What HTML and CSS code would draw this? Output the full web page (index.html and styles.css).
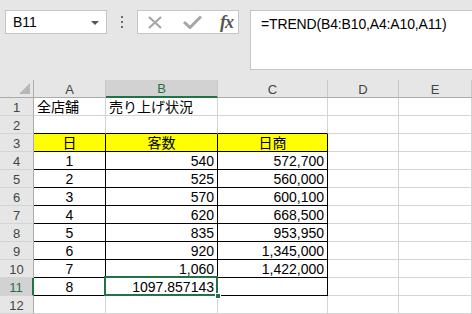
FILE: index.html
```html
<!DOCTYPE html>
<html lang="ja">
<head>
<meta charset="utf-8">
<link rel="stylesheet" href="styles.css">
</head>
<body>
<div class="top">
  <div class="namebox"><span>B11</span><span class="tri"></span></div>
  <div class="dots"><i></i><i></i><i></i></div>
  <div class="fxbox">
    <svg class="ico-x" width="14" height="13" viewBox="0 0 14 13"><path d="M1 1 L13 12 M13 1 L1 12" stroke="#a6a6a6" stroke-width="2.2" fill="none"/></svg>
    <svg class="ico-check" width="19" height="14" viewBox="0 0 19 14"><path d="M1 7 L7 12.5 L18 1.5" stroke="#a6a6a6" stroke-width="3" fill="none"/></svg>
    <span class="fx">fx</span>
  </div>
  <div class="formula">=TREND(B4:B10,A4:A10,A11)</div>
</div>
<div class="sheet">
  <div class="ch corner"><span class="corner-tri"></span></div>
  <div class="ch">A</div>
  <div class="ch sel">B</div>
  <div class="ch">C</div>
  <div class="ch">D</div>
  <div class="ch">E</div>

  <div class="rh">1</div>
  <div class="c">全店舗</div>
  <div class="c">売り上げ状況</div>
  <div class="c"></div><div class="c"></div><div class="c"></div>

  <div class="rh">2</div>
  <div class="c tb"></div><div class="c tb"></div><div class="c tb"></div>
  <div class="c"></div><div class="c"></div>

  <div class="rh">3</div>
  <div class="c b y ctr">日</div>
  <div class="c b y ctr">客数</div>
  <div class="c b y ctr">日商</div>
  <div class="c"></div><div class="c"></div>

  <div class="rh">4</div>
  <div class="c b ctr">1</div><div class="c b r">540</div><div class="c b r">572,700</div>
  <div class="c"></div><div class="c"></div>

  <div class="rh">5</div>
  <div class="c b ctr">2</div><div class="c b r">525</div><div class="c b r">560,000</div>
  <div class="c"></div><div class="c"></div>

  <div class="rh">6</div>
  <div class="c b ctr">3</div><div class="c b r">570</div><div class="c b r">600,100</div>
  <div class="c"></div><div class="c"></div>

  <div class="rh">7</div>
  <div class="c b ctr">4</div><div class="c b r">620</div><div class="c b r">668,500</div>
  <div class="c"></div><div class="c"></div>

  <div class="rh">8</div>
  <div class="c b ctr">5</div><div class="c b r">835</div><div class="c b r">953,950</div>
  <div class="c"></div><div class="c"></div>

  <div class="rh">9</div>
  <div class="c b ctr">6</div><div class="c b r">920</div><div class="c b r">1,345,000</div>
  <div class="c"></div><div class="c"></div>

  <div class="rh">10</div>
  <div class="c b ctr">7</div><div class="c b r">1,060</div><div class="c b r">1,422,000</div>
  <div class="c"></div><div class="c"></div>

  <div class="rh sel">11</div>
  <div class="c b ctr">8</div><div class="c b r active">1097.857143<span class="handle"></span></div><div class="c b r"></div>
  <div class="c"></div><div class="c"></div>

  <div class="rh">12</div>
  <div class="c"></div><div class="c"></div><div class="c"></div>
  <div class="c"></div><div class="c"></div>
</div>
</body>
</html>
```
FILE: styles.css
```css
* { box-sizing: border-box; }
html, body { margin: 0; padding: 0; }
body {
  width: 472px;
  height: 314px;
  overflow: hidden;
  background: #e6e6e6;
  font-family: "Liberation Sans", "Noto Sans CJK JP", sans-serif;
  font-size: 14px;
  color: #000;
}
.top {
  height: 80px;
  display: flex;
  align-items: flex-start;
  padding: 10px 0 0 5px;
}
.namebox {
  width: 102px;
  height: 24px;
  background: #fff;
  border: 1px solid #c6c6c6;
  display: flex;
  align-items: center;
  justify-content: space-between;
  padding: 0 7px 0 7px;
  font-size: 14px;
}
.tri {
  width: 0; height: 0;
  border-left: 4px solid transparent;
  border-right: 4px solid transparent;
  border-top: 4px solid #555;
  margin-top: 1px;
}
.dots {
  width: 30px;
  height: 24px;
  display: flex;
  flex-direction: column;
  align-items: center;
  justify-content: center;
  gap: 3px;
}
.dots i {
  display: block;
  width: 2px; height: 2px;
  background: #6a6a6a;
}
.fxbox {
  width: 102px;
  height: 24px;
  background: #fff;
  border: 1px solid #c6c6c6;
  display: flex;
  align-items: center;
  padding: 0 0 0 10px;
}
.ico-x { margin-right: 21px; }
.ico-check { margin-right: 18px; }
.fx {
  font-family: "Liberation Serif", serif;
  font-style: italic;
  font-weight: bold;
  font-size: 18px;
  color: #555;
  letter-spacing: -1px;
}
.formula {
  margin-left: 11px;
  flex: 1;
  height: 60px;
  background: #fff;
  border: 1px solid #c6c6c6;
  border-right: none;
  padding: 5px 0 0 10px;
  font-size: 14px;
  letter-spacing: -0.15px;
}
.sheet {
  display: grid;
  grid-template-columns: 34px 72px 112px 110px 71px 73px;
  grid-auto-rows: 18px;
  background: #fff;
}
.ch {
  background: #e6e6e6;
  border-right: 1px solid #c8c8c8;
  border-bottom: 1px solid #ababab;
  display: flex;
  align-items: center;
  justify-content: center;
  font-size: 13px;
  color: #444;
  padding-top: 1px;
}
.ch.sel {
  background: #d2d2d2;
  color: #217346;
  border-bottom: 2px solid #217346;
}
.corner { position: relative; border-right-color: #ababab; }
.corner-tri {
  position: absolute;
  right: 3px;
  bottom: 3px;
  width: 0; height: 0;
  border-left: 11px solid transparent;
  border-bottom: 11px solid #b8b8b8;
}
.rh {
  background: #e6e6e6;
  border-right: 1px solid #ababab;
  border-bottom: 1px solid #d4d4d4;
  display: flex;
  align-items: center;
  justify-content: center;
  font-size: 13px;
  color: #444;
  padding-top: 1px;
}
.rh.sel {
  background: #d2d2d2;
  color: #217346;
  border-right: 2px solid #217346;
}
.c {
  border-right: 1px solid #d4d4d4;
  border-bottom: 1px solid #d4d4d4;
  padding: 0 3px;
  display: flex;
  align-items: flex-end;
  line-height: 16px;
  white-space: nowrap;
  position: relative;
}
.c.tb { border-bottom-color: #000; }
.c.b { border-right-color: #000; border-bottom-color: #000; }
.c.y { background: #ffff00; }
.ctr { justify-content: center; }
.r { justify-content: flex-end; }
.active::after {
  content: "";
  position: absolute;
  left: -2px;
  top: -2px;
  right: -1px;
  bottom: -1px;
  border: 2px solid #217346;
  pointer-events: none;
}
.handle {
  position: absolute;
  right: -4px;
  bottom: -4px;
  width: 6px;
  height: 6px;
  background: #217346;
  border: 1px solid #fff;
  z-index: 2;
}
```
